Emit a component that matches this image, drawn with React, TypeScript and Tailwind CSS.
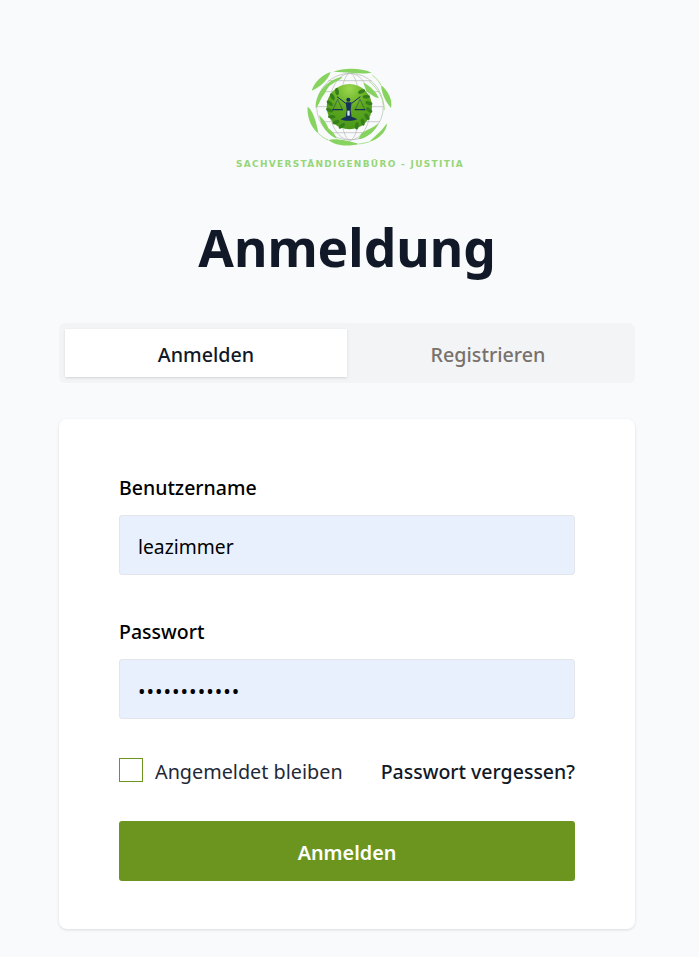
import { useState } from 'react';

function LogoMark() {
  const leaves = [
    'M115 35 C145 24 195 22 230 38 C205 44 165 37 115 35 Z',
    'M50 92 C58 66 80 45 107 36 C100 58 76 82 50 92 Z',
    'M258 76 C280 92 293 120 288 144 C272 126 260 102 258 76 Z',
    'M38 140 C52 150 64 182 70 220 C50 205 35 172 38 140 Z',
    'M100 240 C122 234 160 242 192 252 C160 260 122 258 100 240 Z',
    'M222 246 C236 232 258 216 276 190 C276 214 250 240 222 246 Z',
  ];
  const land = [
    'M62 145 C60 102 92 60 142 50 C138 60 122 62 112 72 C98 78 94 95 86 105 C76 116 74 132 62 145 Z',
    'M205 68 C226 78 242 94 252 114 C236 114 226 100 214 94 Z',
    'M72 165 C84 176 96 190 100 205 C114 214 120 226 126 236 C100 226 78 200 72 165 Z',
    'M198 222 C214 206 236 206 250 188 C242 214 216 234 190 238 Z',
  ];
  const angles = [-138, -118, -98, -78, -58, -38, 38, 58, 78, 98, 118, 138, 158, -158];

  return (
    <svg width="90" height="90" viewBox="21 18 270 270" className="block blur-[0.5px]">
      <defs>
        <radialGradient id="disc" cx="50%" cy="10%" r="90%">
          <stop offset="0%" stopColor="#9ad84e" />
          <stop offset="50%" stopColor="#5fa81f" />
          <stop offset="100%" stopColor="#4a981a" />
        </radialGradient>
      </defs>

      {/* globe */}
      <g fill="none" stroke="#b4b8b4" strokeWidth="2">
        <circle cx="165" cy="140" r="100" />
        <ellipse cx="165" cy="140" rx="62" ry="100" />
        <ellipse cx="165" cy="140" rx="28" ry="100" />
        <path d="M65 140H265M76 95H254M76 185H254M100 62H230M100 218H230" />
      </g>

      <g fill="#86d45f">
        {land.map((d) => (
          <path key={d} d={d} />
        ))}
        {leaves.map((d) => (
          <path key={d} d={d} />
        ))}
      </g>
      <g fill="none" stroke="#9bdc7c" strokeWidth="2.5">
        <path d="M232 46 C244 54 252 64 258 76" />
        <path d="M70 220 C78 228 88 236 100 240" />
        <path d="M192 252 C204 250 214 248 222 246" />
        <path d="M222 64 C248 84 268 118 268 150" />
      </g>

      {/* centre */}
      <circle cx="163" cy="140" r="68" fill="url(#disc)" />
      <g fill="#357f1a">
        {angles.map((a) => {
          const r = (a * Math.PI) / 180;
          const x = 163 + Math.sin(r) * 60;
          const y = 142 - Math.cos(r) * 60;
          return <ellipse key={a} cx={x} cy={y} rx="5.5" ry="11" transform={`rotate(${a + 30} ${x} ${y})`} />;
        })}
      </g>

      {/* scales figure */}
      <g stroke="#16305c" fill="none" strokeWidth="2.5">
        <path d="M152 130 L126 110 M170 130 L196 110" strokeWidth="3" />
        <path d="M128 118 L114 148 M128 118 L142 148 M195 118 L181 148 M195 118 L209 148" strokeWidth="1.4" />
        <path d="M112 149 H144 M179 149 H211" strokeWidth="3.5" />
      </g>
      <path d="M152 127 H170 L167 150 L170 172 H152 L155 150 Z" fill="#16305c" />
      <circle cx="160" cy="119" r="6" fill="#16305c" />
      <path d="M137 178 C150 168 172 168 187 178 C170 184 150 184 137 178 Z" fill="#16305c" />
      <path d="M157 152 H164 V167 H157 Z" fill="#dfe8ef" />
    </svg>
  );
}

export default function App() {
  const [tab, setTab] = useState('login');
  const [username, setUsername] = useState('leazimmer');
  const [password, setPassword] = useState('leazimmer123');

  return (
    <div className="min-h-[957px] bg-[#f9fafb] font-['Noto_Sans','Open_Sans',sans-serif] text-[#111827] pr-[5px] flex flex-col items-center pt-[66px]">
      <LogoMark />
      <div className="mt-[3px] ml-[6px] font-['DejaVu_Sans',sans-serif] text-[9px] leading-[10px] font-bold tracking-[1.3px] text-[#96d678]">
        SACHVERSTÄNDIGENBÜRO - JUSTITIA
      </div>

      <h1 className="mt-[42px] text-[51.5px] leading-[72px] font-bold text-center">Anmeldung</h1>

      <div className="mt-[40px] w-[576px] bg-[#f3f4f6] rounded-md p-1.5 grid grid-cols-2">
        <button
          onClick={() => setTab('login')}
          className={
            tab === 'login'
              ? 'h-12 pt-1 bg-white text-[19.7px] font-medium shadow-sm'
              : 'h-12 pt-1 text-[19.7px] font-medium text-[#6b7280]'
          }
        >
          Anmelden
        </button>
        <button
          onClick={() => setTab('register')}
          className={
            tab === 'register'
              ? 'h-12 pt-1 bg-white text-[19.7px] font-medium shadow-sm'
              : 'h-12 pt-1 text-[19.7px] font-medium text-[#78716c]'
          }
        >
          Registrieren
        </button>
      </div>

      <form className="mt-9 w-[576px] bg-white rounded-lg shadow-[0_1px_3px_rgba(0,0,0,0.12)] px-[60px] pt-[55px] pb-12">
        <label className="block text-[19.5px] leading-[28px] font-medium text-black">Benutzername</label>
        <input
          value={username}
          onChange={(e) => setUsername(e.target.value)}
          className="mt-[13px] block w-full h-[60px] pl-[18px] pr-[19px] pt-[2px] bg-[#e8f0fe] border border-[#e2e5ea] rounded-[3px] text-[19.3px] text-black outline-none"
        />

        <label className="mt-[43px] block text-[19.5px] leading-[28px] font-medium text-black">Passwort</label>
        <input
          type="password"
          value={password}
          onChange={(e) => setPassword(e.target.value)}
          className="mt-[13px] block w-full h-[60px] pl-[18px] pr-[19px] pt-[4px] bg-[#e8f0fe] border border-[#e2e5ea] rounded-[3px] text-xl tracking-[1px] text-black outline-none"
        />

        <div className="mt-[37px] flex items-center justify-between">
          <label className="flex items-center gap-3 text-[19.8px] text-[#1f2937]">
            <span className="w-6 h-6 border border-[#6b951f] bg-white" />
            <span className="h-7 pt-1 leading-[24px]">Angemeldet bleiben</span>
          </label>
          <a className="h-7 pt-1 text-[19.5px] leading-[24px] font-medium">Passwort vergessen?</a>
        </div>

        <button
          type="button"
          className="mt-[37px] block w-full h-[60px] pt-1 bg-[#6b951f] rounded-[3px] text-white text-[19.8px] font-semibold"
        >
          Anmelden
        </button>
      </form>
    </div>
  );
}
